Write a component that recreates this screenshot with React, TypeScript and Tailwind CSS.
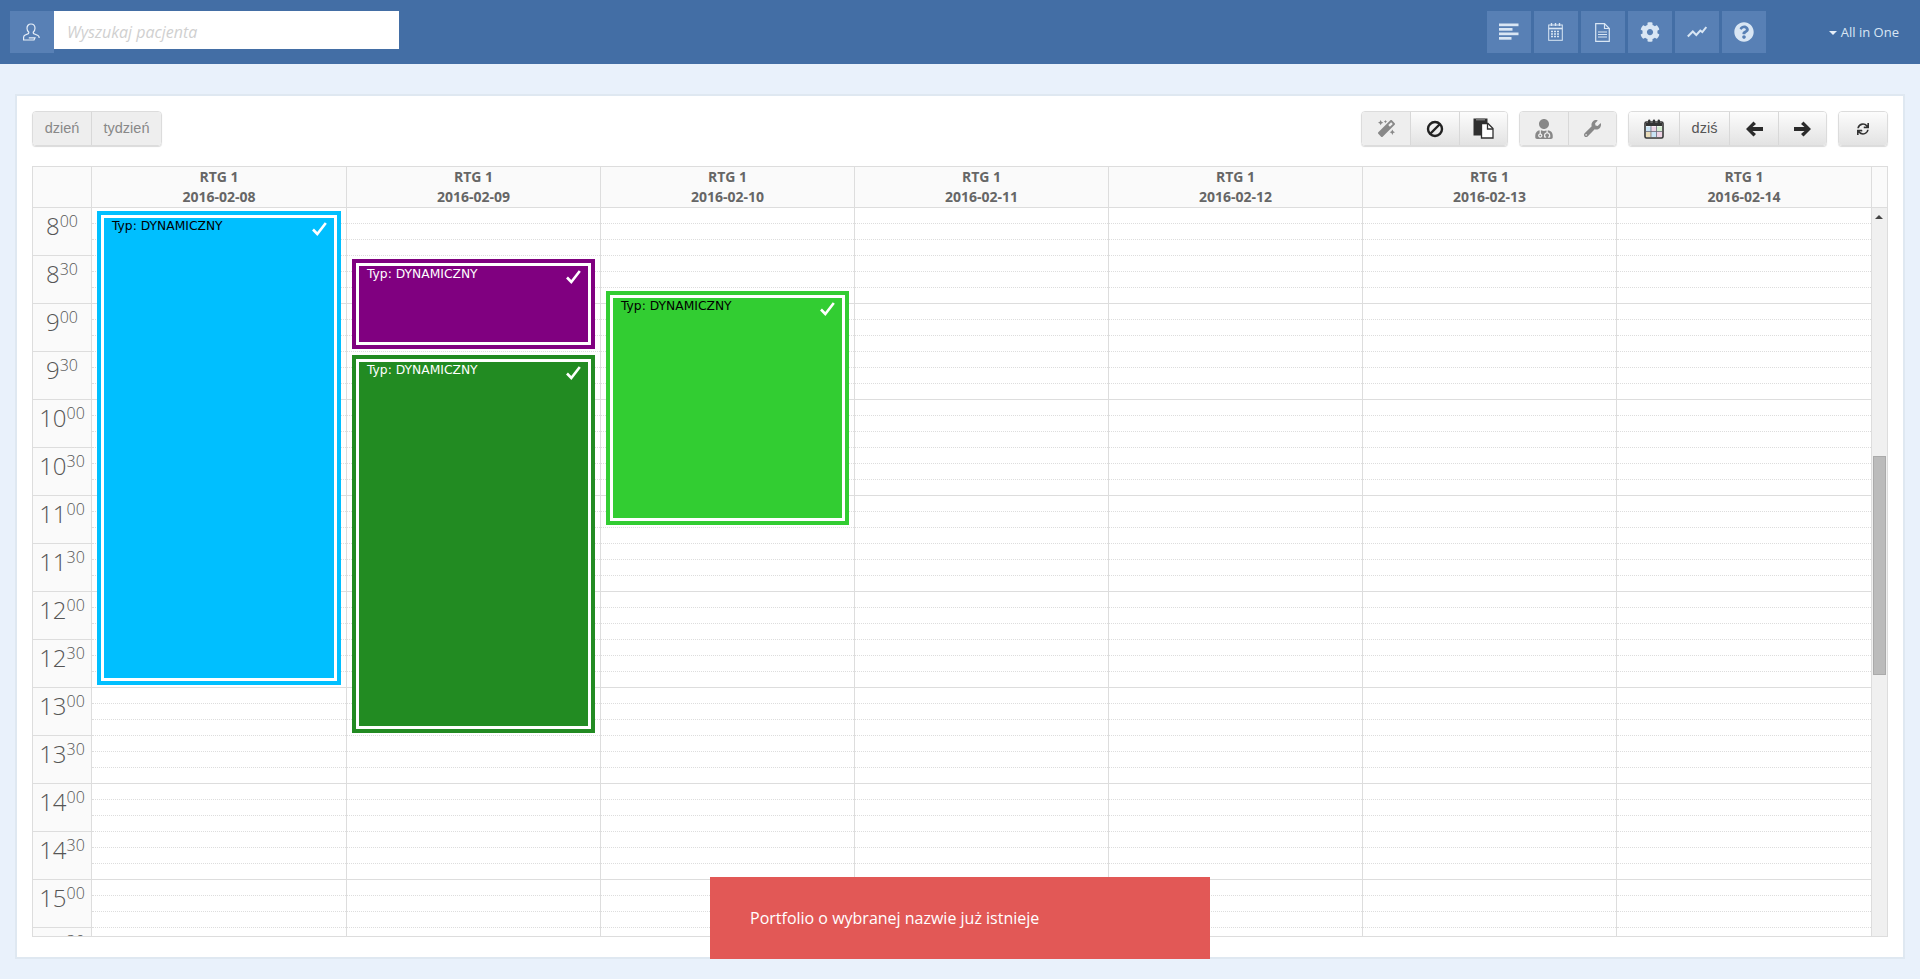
import type { ReactNode } from 'react'
import { FaCog, FaMagic, FaQuestionCircle, FaSync, FaUserMd, FaWrench } from 'react-icons/fa'

const days = ['2016-02-08', '2016-02-09', '2016-02-10', '2016-02-11', '2016-02-12', '2016-02-13', '2016-02-14']
const times = ['8', '8', '9', '9', '10', '10', '11', '11', '12', '12', '13', '13', '14', '14', '15', '15']
const slots = Array.from({ length: 48 }, (_, i) => i)

const events = [
  { day: 0, pos: 'top-[3px] h-[474px]', border: 'border-[#00bfff]', fill: 'bg-[#00bfff] text-black' },
  { day: 1, pos: 'top-[51px] h-[90px]', border: 'border-[#800080]', fill: 'bg-[#800080] text-white' },
  { day: 1, pos: 'top-[147px] h-[378px]', border: 'border-[#228b22]', fill: 'bg-[#228b22] text-white' },
  { day: 2, pos: 'top-[83px] h-[234px]', border: 'border-[#32cd32]', fill: 'bg-[#32cd32] text-black' },
]

function NavButton({ children }: { children: ReactNode }) {
  return <div className="flex h-[42px] w-[44px] items-center justify-center bg-[#5880b5] text-[#d9e6f4]">{children}</div>
}

function ToolButton({ children, off, w = 'w-[49px]' }: { children: ReactNode; off?: boolean; w?: string }) {
  return (
    <div
      className={
        off
          ? `flex h-full ${w} items-center justify-center border-r border-[#d8d8d8] bg-[#eeeeee] text-[#888] last:border-r-0`
          : `flex h-full ${w} items-center justify-center border-r border-[#d8d8d8] bg-gradient-to-b from-[#fcfcfc] to-[#e3e3e3] text-[#333] last:border-r-0`
      }
    >
      {children}
    </div>
  )
}

function ToolGroup({ children }: { children: ReactNode }) {
  return <div className="flex h-[35px] overflow-hidden rounded border border-[#dcdcdc] shadow-[0_1px_1px_rgba(0,0,0,0.15)]">{children}</div>
}

function PasteIcon() {
  return (
    <svg width="21" height="21" viewBox="0 0 21 21">
      <rect x="0.5" y="0.5" width="14" height="17" fill="#2f2f2f" />
      <rect x="3" y="0.5" width="9" height="2" fill="#777" />
      <path d="M8.5 5.5h6.5l5 5v9.5h-11.5z" fill="#fff" stroke="#2f2f2f" strokeWidth="1.3" />
      <path d="M14.5 5.5v5.5h5.5" fill="none" stroke="#2f2f2f" strokeWidth="1.3" />
    </svg>
  )
}

function BanIcon() {
  return (
    <svg width="18" height="18" viewBox="0 0 18 18" fill="none" stroke="#222" strokeWidth="2.4">
      <circle cx="9" cy="9" r="7" />
      <path d="M14 4L4 14" />
    </svg>
  )
}

function ArrowIcon({ flip }: { flip?: boolean }) {
  return (
    <svg width="17" height="16" viewBox="0 0 17 16" fill="#2b2b2b" className={flip ? '-scale-x-100' : ''}>
      <path d="M0 8L7.5 0.5 10 3 6.5 6H17V10H6.5L10 13 7.5 15.5Z" />
    </svg>
  )
}

function ColorCalendarIcon() {
  return (
    <svg width="20" height="20" viewBox="0 0 20 20">
      <rect x="1" y="3" width="18" height="16" rx="1.5" fill="#fff" stroke="#333" strokeWidth="1.6" />
      <rect x="2" y="4" width="16" height="3" fill="#333" />
      <rect x="4" y="0.5" width="2.4" height="5" rx="1.2" fill="#333" />
      <rect x="8.8" y="0.5" width="2.4" height="5" rx="1.2" fill="#333" />
      <rect x="13.6" y="0.5" width="2.4" height="5" rx="1.2" fill="#333" />
      <rect x="2" y="7.5" width="5" height="5" fill="#c9e4f5" />
      <rect x="7.5" y="7.5" width="5" height="5" fill="#eed3e4" />
      <rect x="13" y="7.5" width="5" height="5" fill="#d4ecd0" />
      <rect x="2" y="13" width="5" height="5" fill="#e9dcb9" />
      <rect x="7.5" y="13" width="5" height="5" fill="#c9e4f5" />
      <rect x="13" y="13" width="5" height="5" fill="#eed3e4" />
      <path d="M7 7v11M12.5 7v11M2 12.5h16" stroke="#667" strokeWidth="0.8" />
    </svg>
  )
}

function TopBar() {
  return (
    <header className="flex h-16 items-start bg-[#436ea5] pt-[11px] pr-[21px] pl-[10px]">
      <div className="flex h-[42px] w-[44px] items-center justify-center bg-[#5880b5] text-[#e6eef8]">
        <svg width="18" height="18" viewBox="0 0 18 18" fill="none" stroke="currentColor" strokeWidth="1.2">
          <path d="M8 1c2.5 0 4 2 4 4.2 0 1.8-.8 3.2-1.8 4l.3 1.3 4.500 2c.8.4 1.200 1 1.200 2.500" />
          <path d="M8 1C5.500 1 4 3 4 5.200c0 1.800.8 3.200 1.800 4l-.3 1.300-3.700 1.700C1 12.600.6 13.300.6 14.500v2.500h10.400l1-2.200H5.800" />
        </svg>
      </div>
      <input
        placeholder="Wyszukaj pacjenta"
        className="h-[38px] w-[345px] bg-white pt-[3px] pl-[13px] font-['Open_Sans',sans-serif] text-[16px] italic outline-none placeholder:text-[#d0d0d0]"
      />
      <div className="ml-auto flex gap-[3px]">
        <NavButton>
          <svg width="20" height="18" viewBox="0 0 20 18" fill="currentColor">
            <rect y="0.5" width="19.5" height="2.7" />
            <rect y="5" width="13.5" height="2.7" />
            <rect y="9.5" width="19.5" height="2.7" />
            <rect y="14" width="12.5" height="2.7" />
          </svg>
        </NavButton>
        <NavButton>
          <svg width="15" height="18" viewBox="0 0 15 18" fill="none" stroke="currentColor">
            <rect x="0.7" y="2" width="13.6" height="15.3" />
            <path d="M0.7 5.5h13.6" strokeWidth="1.6" />
            <path d="M3.5 0v3M7.5 0v3M11.5 0v3" strokeWidth="1.4" />
            <path d="M3 8.5h9M3 11h9M3 13.5h9" strokeWidth="1.4" strokeDasharray="2 1" />
          </svg>
        </NavButton>
        <NavButton>
          <svg width="15" height="19" viewBox="0 0 15 19" fill="none" stroke="currentColor" strokeWidth="1.2">
            <path d="M0.7 0.7h8.8l4.8 4.8v12.8H0.7z" />
            <path d="M9.5 0.7v4.8h4.8" />
            <path d="M3 9h9M3 11.5h9M3 14h9" />
          </svg>
        </NavButton>
        <NavButton>
          <FaCog size={20} />
        </NavButton>
        <NavButton>
          <svg width="20" height="12" viewBox="0 0 20 12" fill="none" stroke="currentColor" strokeWidth="2">
            <path d="M0.8 10.5l5-5 3.5 3.5 4-4.500 2 1.500 4-5" />
          </svg>
        </NavButton>
        <NavButton>
          <FaQuestionCircle size={20} />
        </NavButton>
      </div>
      <div className="ml-[63px] flex h-[42px] items-center gap-1 pt-[1px] font-['Open_Sans',sans-serif] text-[13px] text-[#d9e6f4]">
        <span className="h-0 w-0 border-x-[4px] border-t-[4px] border-x-transparent border-t-[#e6eef8]" />
        <span>All in One</span>
      </div>
    </header>
  )
}

function Toolbar() {
  return (
    <div className="flex items-start justify-between font-['Liberation_Sans',sans-serif] text-[14.5px]">
      <ToolGroup>
        <ToolButton off w="w-[59px]">dzień</ToolButton>
        <ToolButton off w="w-[69px]">tydzień</ToolButton>
      </ToolGroup>
      <div className="flex gap-[11px]">
        <ToolGroup>
          <ToolButton off>
            <FaMagic size={17} />
          </ToolButton>
          <ToolButton>
            <BanIcon />
          </ToolButton>
          <ToolButton w="w-[47px]">
            <PasteIcon />
          </ToolButton>
        </ToolGroup>
        <ToolGroup>
          <ToolButton off>
            <FaUserMd size={20} />
          </ToolButton>
          <ToolButton off w="w-[47px]">
            <FaWrench size={17} />
          </ToolButton>
        </ToolGroup>
        <ToolGroup>
          <ToolButton w="w-[51px]">
            <ColorCalendarIcon />
          </ToolButton>
          <ToolButton w="w-[50px]">
            <span className="text-[#555]">dziś</span>
          </ToolButton>
          <ToolButton>
            <ArrowIcon />
          </ToolButton>
          <ToolButton w="w-[47px]">
            <ArrowIcon flip />
          </ToolButton>
        </ToolGroup>
        <ToolGroup>
          <ToolButton w="w-[48px]">
            <FaSync size={12} />
          </ToolButton>
        </ToolGroup>
      </div>
    </div>
  )
}

function Calendar() {
  return (
    <div className="mt-5 border border-[#ddd] font-['Open_Sans',sans-serif]">
      <div className="grid grid-cols-[59px_255px_254px_254px_254px_254px_254px_255px_15px] border-b border-[#ddd] bg-[#fafafa]">
        <div className="border-r border-[#ddd]" />
        {days.map((day) => (
          <div key={day} className="h-10 border-r border-[#ddd] text-center text-[14px] leading-5 font-bold text-[#666]">
            <div>RTG 1</div>
            <div>{day}</div>
          </div>
        ))}
        <div />
      </div>
      <div className="grid h-[728px] grid-cols-[59px_255px_254px_254px_254px_254px_254px_255px_15px] overflow-hidden">
        <div className="bg-[#fafafa]">
          {times.map((hour, i) => (
            <div
              key={i}
              className={
                i % 2 === 0
                  ? 'h-12 border-r border-b border-r-[#ddd] border-b-[#ddd] border-b-dotted text-center text-[24px] leading-[36px] font-light text-[#555]'
                  : 'h-12 border-r border-b border-[#ddd] text-center text-[24px] leading-[36px] font-light text-[#555]'
              }
            >
              {hour}
              <sup className="text-[16px]">{i % 2 === 0 ? '00' : '30'}</sup>
            </div>
          ))}
        </div>
        {days.map((day, d) => (
          <div key={day} className="relative border-r border-[#ddd]">
            {slots.map((s) => (
              <div key={s} className={s % 6 === 5 ? 'h-4 border-b border-[#ddd]' : 'h-4 border-b border-dotted border-[#ddd]'} />
            ))}
            {events
              .filter((e) => e.day === d)
              .map((e) => (
                <div key={e.pos} className={`absolute right-[5px] left-[5px] border-4 ${e.pos} ${e.border}`}>
                  <div className={`relative h-full border-[3px] border-white pt-[1px] pl-2 font-['DejaVu_Sans',sans-serif] text-[12.3px] leading-[14px] ${e.fill}`}>
                    Typ: DYNAMICZNY
                    <svg width="15" height="14" viewBox="0 0 15 14" fill="none" stroke="white" strokeWidth="2.6" className="absolute top-1 right-[7px]">
                      <path d="M1 7.5L5.3 12 13.8 1" />
                    </svg>
                  </div>
                </div>
              ))}
          </div>
        ))}
        <div className="-ml-px flex flex-col items-center justify-between bg-[#f0f0f0] py-[7px]">
          <span className="h-0 w-0 border-x-[4px] border-b-[4px] border-x-transparent border-b-[#444]" />
          <span className="h-0 w-0 border-x-[4px] border-t-[4px] border-x-transparent border-t-[#444]" />
        </div>
      </div>
    </div>
  )
}

export default function App() {
  return (
    <div className="relative h-[979px] overflow-hidden bg-[#e9f1fb]">
      <TopBar />
      <main className="mx-[15px] mt-[30px] h-[865px] border-2 border-[#dfe8f1] bg-white px-[15px] pt-[15px]">
        <Toolbar />
        <Calendar />
      </main>
      {/* scrollbar thumb */}
      <div className="absolute top-[456px] left-[1873px] h-[219px] w-[13px] border border-[#aaa] bg-[#bbb]" />
      <div className="absolute bottom-5 left-[710px] flex h-[82px] w-[500px] items-center bg-[#e25856] pl-10 font-['Open_Sans',sans-serif] text-[16px] text-white">
        Portfolio o wybranej nazwie już istnieje
      </div>
    </div>
  )
}
